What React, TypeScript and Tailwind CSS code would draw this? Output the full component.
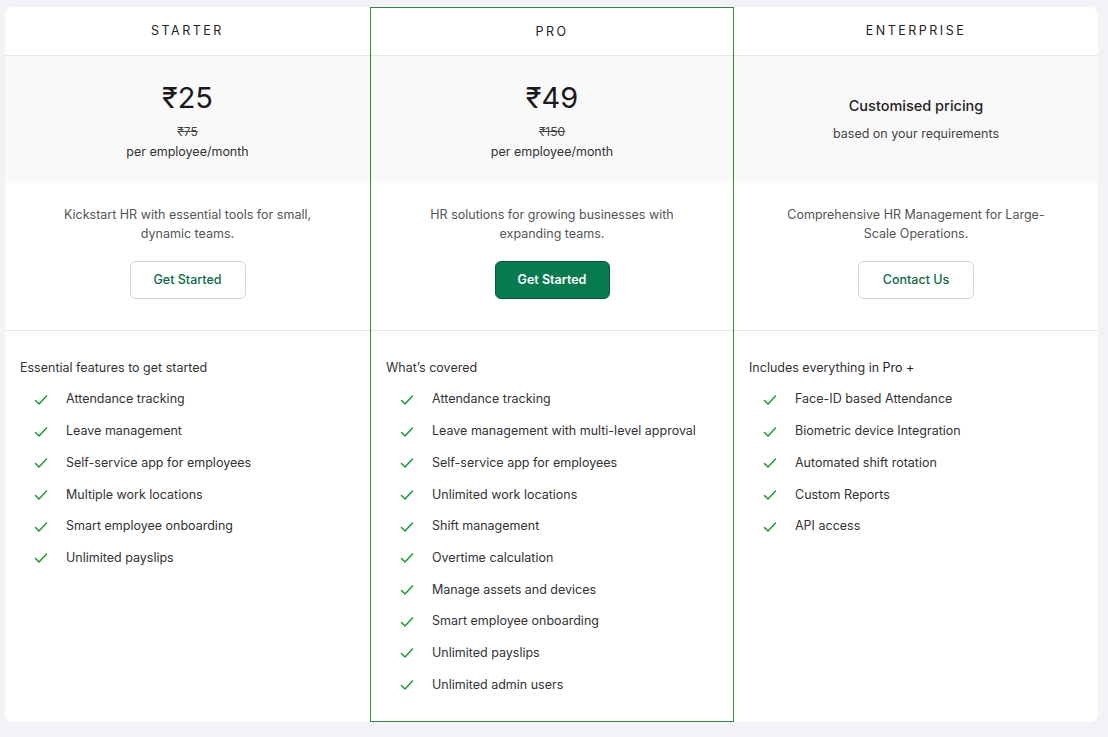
import React from "react";

const Check = () => (
  <svg width="16" height="16" viewBox="0 0 16 16" fill="none" className="shrink-0">
    <path d="M2.5 8.5l3.5 3.5 7.5-8" stroke="#1f9d3a" strokeWidth="1.6" strokeLinecap="round" strokeLinejoin="round" />
  </svg>
);

type Plan = {
  name: string;
  price?: string;
  old?: string;
  custom?: boolean;
  desc: string[];
  btn: string;
  primary?: boolean;
  title: React.ReactNode;
  features: string[];
};

const plans: Plan[] = [
  {
    name: "STARTER", price: "₹25", old: "₹75",
    desc: ["Kickstart HR with essential tools for small,", "dynamic teams."],
    btn: "Get Started", title: "Essential features to get started",
    features: ["Attendance tracking", "Leave management", "Self-service app for employees", "Multiple work locations", "Smart employee onboarding", "Unlimited payslips"],
  },
  {
    name: "PRO", price: "₹49", old: "₹150",
    desc: ["HR solutions for growing businesses with", "expanding teams."],
    btn: "Get Started", primary: true, title: "What’s covered",
    features: ["Attendance tracking", "Leave management with multi-level approval", "Self-service app for employees", "Unlimited work locations", "Shift management", "Overtime calculation", "Manage assets and devices", "Smart employee onboarding", "Unlimited payslips", "Unlimited admin users"],
  },
  {
    name: "ENTERPRISE", custom: true,
    desc: ["Comprehensive HR Management for Large-", "Scale Operations."],
    btn: "Contact Us", title: <>Includes everything in <span className="text-[#222]">Pro +</span></>,
    features: ["Face-ID based Attendance", "Biometric device Integration", "Automated shift rotation", "Custom Reports", "API access"],
  },
];

export default function App() {
  return (
    <div className="w-[1108px] h-[737px] bg-[#f2f3f6] pt-[7px] px-[5px]" style={{ fontFamily: "Inter, 'Liberation Sans', sans-serif" }}>
      <div className="bg-white rounded-lg h-[715px] w-[1093px] grid grid-cols-[365px_364px_364px]">
        {plans.map((p) => (
          <div key={p.name} className={`flex flex-col ${p.primary ? "border border-[#2e8b3e]" : ""}`}>
            <div className={`${p.primary ? "h-[48px]" : "h-[49px]"} flex items-center justify-center pt-[1px] border-b border-[#e8e8e8] text-[12.5px] tracking-[0.2em] text-[#222]`}>
              {p.name}
            </div>
            <div className="h-[127px] bg-[#f9f9f9] flex flex-col items-center justify-center pt-[3px]">
              {p.custom ? (
                <>
                  <div className="text-[14.5px] font-medium text-[#222] -mt-1">Customised pricing</div>
                  <div className="text-[12.5px] text-[#444] mt-[8px]">based on your requirements</div>
                </>
              ) : (
                <>
                  <div className="text-[29px] leading-[34px] text-[#1a1a1a]">{p.price}</div>
                  <div className="text-[12px] text-[#444] line-through mt-[8px]">{p.old}</div>
                  <div className="text-[12.5px] text-[#333] mt-[2px]">per employee/month</div>
                </>
              )}
            </div>
            <div className="h-[148px] border-b border-[#e8e8e8] flex flex-col items-center pt-[22px]">
              <div className="text-[12.5px] leading-[19px] text-[#555] text-center">
                {p.desc.map((d) => <div key={d}>{d}</div>)}
              </div>
              {p.primary ? (
                <button className="mt-[18px] w-[115px] h-[38px] rounded-md bg-[#087a50] border border-[#0b5b3a] text-white text-[12.5px] font-semibold">{p.btn}</button>
              ) : (
                <button className="mt-[18px] w-[116px] h-[38px] rounded-md bg-white border border-[#d4d4d4] text-[#0b6b45] text-[12.5px] font-medium">{p.btn}</button>
              )}
            </div>
            <div className="pl-[15px] pt-[29px]">
              <div className="text-[12.5px] text-[#333] leading-[16px] mb-[8px]">{p.title}</div>
              {p.features.map((f) => (
                <div key={f} className="flex items-center h-[31.7px] pl-[13px]">
                  <Check />
                  <span className="ml-[17px] text-[12.5px] text-[#333]">{f}</span>
                </div>
              ))}
            </div>
          </div>
        ))}
      </div>
    </div>
  );
}
